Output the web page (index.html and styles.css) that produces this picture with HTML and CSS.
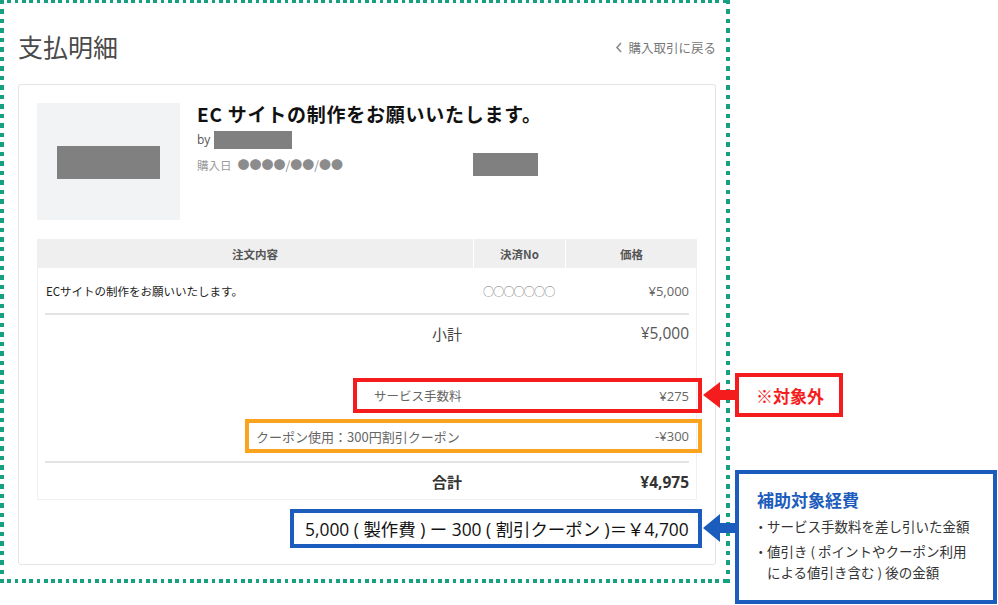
FILE: index.html
```html
<!DOCTYPE html>
<html lang="ja">
<head>
<meta charset="utf-8">
<title>支払明細</title>
<link rel="stylesheet" href="styles.css">
</head>
<body>
<div class="frame">
  <div class="page-head">
    <h1 class="page-title">支払明細</h1>
    <a class="back-link" href="#"><svg class="chev" width="8" height="11" viewBox="0 0 8 11"><path d="M6 1 L2 5.5 L6 10" fill="none" stroke="#8a8a8a" stroke-width="1.6"/></svg>購入取引に戻る</a>
  </div>
  <div class="card">
    <div class="summary">
      <div class="thumb"><div class="redact thumb-redact"></div></div>
      <div class="info">
        <div class="item-title">EC サイトの制作をお願いいたします。</div>
        <div class="by-row"><span class="by">by</span><span class="redact by-redact"></span></div>
        <div class="date-row"><span class="date-cell"><span class="date-label">購入日</span><span class="date-val">●●●●/●●/●●</span></span><span class="redact date-redact"></span></div>
      </div>
    </div>
    <div class="order">
      <div class="thead">
        <div class="th">注文内容</div>
        <div class="th">決済No</div>
        <div class="th">価格</div>
      </div>
      <div class="tbody">
        <div class="item-row">
          <div class="td-name">ECサイトの制作をお願いいたします。</div>
          <div class="td-no">○○○○○○○</div>
          <div class="td-price">¥5,000</div>
        </div>
        <div class="sep"></div>
        <div class="sum-row">
          <div class="sum-label">小計</div>
          <div class="sum-val">¥5,000</div>
        </div>
        <div class="hl hl-red">
          <span>サービス手数料</span><span>¥275</span>
        </div>
        <div class="hl hl-orange">
          <span>クーポン使用：300円割引クーポン</span><span>-¥300</span>
        </div>
        <div class="sep sep-total"></div>
        <div class="sum-row total-row">
          <div class="sum-label">合計</div>
          <div class="sum-val">¥4,975</div>
        </div>
      </div>
    </div>
    <div class="formula">5,000 ( 製作費 ) ー 300 ( 割引クーポン )＝￥4,700</div>
  </div>
</div>

<svg class="arrow arrow-red" width="35" height="26" viewBox="0 0 35 26"><polygon points="0,13 17,0 17,8 35,8 35,18 17,18 17,26" fill="#f41c1c"/></svg>
<div class="callout-red">※対象外</div>

<svg class="arrow arrow-blue" width="35" height="28" viewBox="0 0 35 28"><polygon points="0,14 17,0 17,9 35,9 35,19 17,19 17,28" fill="#1c5cbc"/></svg>
<div class="note">
  <div class="note-title">補助対象経費</div>
  <ul class="note-list">
    <li><span class="dot">・</span><span>サービス手数料を差し引いた金額</span></li>
    <li><span class="dot">・</span><span>値引き ( ポイントやクーポン利用<br>による値引き含む ) 後の金額</span></li>
  </ul>
</div>
</body>
</html>
```
FILE: styles.css
```css
* { box-sizing: border-box; }
html, body { margin: 0; padding: 0; }
body {
  width: 998px;
  height: 605px;
  position: relative;
  overflow: hidden;
  background: #fff;
  font-family: "Open Sans", "Noto Sans CJK JP", sans-serif;
  color: #333;
}

.frame {
  width: 730px;
  height: 583px;
  padding: 28px 14px 0 18px;
  background:
    repeating-linear-gradient(90deg, #17a07f 0 3.7px, transparent 3.7px 7.3px) left top / 100% 3px no-repeat,
    repeating-linear-gradient(90deg, #17a07f 0 3.7px, transparent 3.7px 7.3px) left bottom / 100% 4px no-repeat,
    repeating-linear-gradient(180deg, #17a07f 0 4.5px, transparent 4.5px 9.5px) left top / 4px 100% no-repeat,
    repeating-linear-gradient(180deg, #17a07f 0 4.5px, transparent 4.5px 9.5px) right top / 4px 100% no-repeat;
}

.page-head {
  height: 36px;
  display: flex;
  align-items: center;
  justify-content: space-between;
}
.page-title {
  margin: 0;
  font-family: "Noto Sans CJK JP", sans-serif;
  font-weight: 400;
  font-size: 25px;
  line-height: 36px;
  color: #4a4a4a;
}
.back-link {
  display: flex;
  align-items: center;
  gap: 5px;
  font-family: "Noto Sans CJK JP", sans-serif;
  font-size: 12.5px;
  color: #777;
  text-decoration: none;
  margin-top: 2px;
}

.card {
  margin-top: 20px;
  height: 481px;
  border: 1px solid #e4e4e4;
  border-radius: 3px;
  padding: 18px 18px 16px 18px;
}

.summary {
  display: flex;
  gap: 17px;
}
.thumb {
  width: 143px;
  height: 117px;
  background: #f2f3f5;
  display: flex;
  align-items: center;
  justify-content: center;
  padding-top: 2px;
}
.redact { background: #808080; display: block; }
.thumb-redact { width: 103px; height: 33px; }

.info { flex: 1; }
.item-title {
  font-family: "Noto Sans CJK JP", sans-serif;
  font-weight: 700;
  font-size: 19px;
  line-height: 22px;
  color: #111;
  letter-spacing: 0.75px;
}
.by-row {
  margin-top: 6px;
  height: 18px;
  display: flex;
  align-items: center;
  gap: 4px;
}
.by { font-size: 12px; color: #555; margin-top: -2px; }
.by-redact { width: 78px; height: 18px; }
.date-row {
  margin-top: 4px;
  height: 23px;
  display: flex;
  align-items: center;
}
.date-cell {
  width: 276px;
  font-family: "Noto Sans CJK JP", sans-serif;
  font-size: 11.5px;
  color: #9a9a9a;
}
.date-label { margin-right: 6px; }
.date-val { color: #8c8c8c; font-size: 12px; }
.date-redact { width: 65px; height: 23px; }

.order { margin-top: 19px; }
.thead {
  display: grid;
  grid-template-columns: 436px 92px 132px;
  height: 29px;
  background: #efefef;
}
.th {
  display: flex;
  align-items: center;
  justify-content: center;
  font-family: "Noto Sans CJK JP", sans-serif;
  font-weight: 700;
  font-size: 11.5px;
  color: #555;
}
.th + .th { border-left: 1px solid #fff; }

.tbody {
  border: 1px solid #f0f0f0;
  border-top: none;
  height: 232px;
}
.item-row {
  display: grid;
  grid-template-columns: 435px 92px 131px;
  height: 45px;
  align-items: center;
  font-family: "Noto Sans CJK JP", sans-serif;
  font-size: 11.5px;
}
.td-name { padding-left: 8px; color: #222; }
.td-no { padding-left: 10px; color: #777; font-size: 11px; letter-spacing: -0.8px; }
.td-price { text-align: right; padding-right: 7px; color: #666; font-family: "Open Sans", sans-serif; font-size: 13px; }

.sep {
  height: 2px;
  background: #e4e4e4;
  margin: 0 7px;
}
.sep-total { margin-top: 8px; }

.sum-row {
  display: grid;
  grid-template-columns: 1fr 224px;
  height: 36px;
  align-items: center;
}
.sum-label {
  text-align: right;
  padding-right: 10px;
  font-family: "Noto Sans CJK JP", sans-serif;
  font-size: 15px;
  color: #444;
}
.sum-val {
  text-align: right;
  padding-right: 7px;
  font-size: 15.5px;
  color: #555;
}
.total-row { height: 37px; }
.total-row .sum-label { font-weight: 700; color: #333; }
.total-row .sum-val { font-weight: 700; color: #333; }

.hl {
  display: flex;
  justify-content: space-between;
  align-items: center;
  font-family: "Noto Sans CJK JP", sans-serif;
  font-size: 12.5px;
  color: #666;
  margin-right: -6px;
  margin-left: auto;
}
.hl span:last-child { font-family: "Open Sans", sans-serif; font-size: 13px; color: #666; }
.hl-red {
  margin-top: 27px;
  width: 349px;
  height: 35px;
  border: 4px solid #f41c1c;
  padding: 0 9px 0 17px;
}
.hl-orange {
  margin-top: 6px;
  width: 457px;
  height: 34px;
  border: 4px solid #fba31e;
  padding: 0 9px 0 7px;
  font-size: 13px;
}

.formula {
  margin-top: 9px;
  margin-left: auto;
  margin-right: -5px;
  width: 412px;
  height: 39px;
  border: 4px solid #1c5cbc;
  display: flex;
  align-items: center;
  padding-left: 11px;
  font-family: "Open Sans", "Noto Sans CJK JP", sans-serif;
  font-size: 17.4px;
  color: #111;
  white-space: nowrap;
}

.arrow { position: absolute; display: block; }
.arrow-red { left: 703px; top: 382px; }
.arrow-blue { left: 703px; top: 514px; }

.callout-red {
  position: absolute;
  left: 735px;
  top: 373px;
  width: 108px;
  height: 44px;
  border: 4px solid #f41c1c;
  display: flex;
  align-items: center;
  justify-content: center;
  font-family: "Noto Sans CJK JP", sans-serif;
  font-weight: 700;
  font-size: 17px;
  color: #f41c1c;
  padding-left: 2px;
}

.note {
  position: absolute;
  left: 735px;
  top: 470px;
  width: 262px;
  height: 134px;
  border: 4px solid #1c5cbc;
  padding: 14px 4px 0 18px;
  background: #fff;
}
.note-title {
  font-family: "Noto Sans CJK JP", sans-serif;
  font-weight: 700;
  font-size: 17px;
  line-height: 24px;
  color: #1c5cbc;
}
.note-list {
  list-style: none;
  margin: 4px 0 0 0;
  padding: 0;
  font-family: "Noto Sans CJK JP", sans-serif;
  font-size: 13.5px;
  line-height: 21px;
  color: #333;
  white-space: nowrap;
}
.note-list li { display: flex; margin-bottom: 4px; }
.dot { flex: none; width: 10px; margin-left: -3px; margin-right: 3px; }
```
